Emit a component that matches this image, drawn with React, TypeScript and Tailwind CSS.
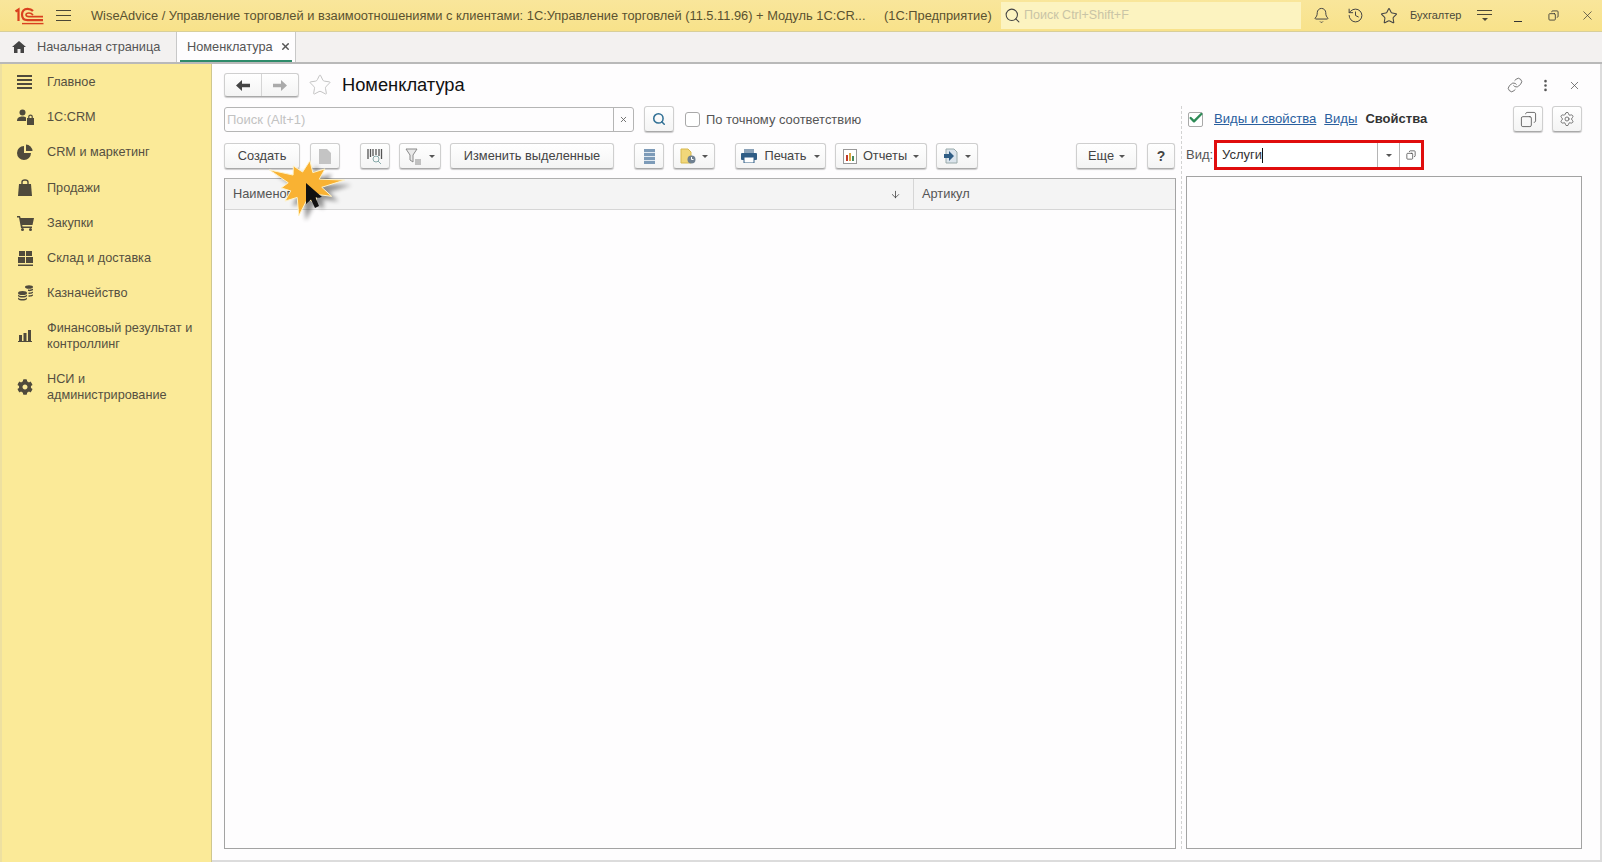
import { ArrowDown, Check, Copy, Link, MoreVertical, Search, Settings, Star, X, Bell, History } from "lucide-react";
import { FaCog } from "react-icons/fa";
import type { ReactNode } from "react";

function Caret() {
  return <span className="inline-block w-0 h-0 border-l-[3px] border-r-[3px] border-t-[3px] border-l-transparent border-r-transparent border-t-[#555]" />;
}

function Btn({ className = "", children }: { className?: string; children?: ReactNode }) {
  return (
    <div className={"h-[26px] flex items-center justify-center rounded-[3px] border border-[#cfcfcf] border-b-[#a9a9a9] bg-gradient-to-b from-white to-[#f4f4f4] shadow-[0_1px_1px_rgba(0,0,0,0.2)] text-[12.8px] text-[#444] shrink-0 " + className}>
      {children}
    </div>
  );
}

function Logo() {
  return (
    <svg width="30" height="18" viewBox="0 0 30 18" fill="none" stroke="#d9401f" strokeWidth="2.2">
      <path d="M1.5 4.5 L4.5 2.5 V14" />
      <path d="M19 4 C17.5 2.2 15.5 1.8 13.5 1.8 C10 1.8 8 4.4 8 7.6 C8 11 10 13.2 13.5 13.2 H29" />
      <path d="M19 8 C18 6.6 16.8 6 15 6 C13 6 12 7 12 7.8 C12 8.8 13.4 9.6 15 9.6 H29" strokeWidth="1.6" />
      <path d="M8 16.6 H29.5" strokeWidth="1.4" />
    </svg>
  );
}

function NavArrow({ color, flip }: { color: string; flip?: boolean }) {
  return (
    <svg width="14" height="11" viewBox="0 0 14 11" fill={color} className={flip ? "-scale-x-100" : ""}>
      <path d="M0 5.5 L6 0 V3.8 H14 V7.2 H6 V11 Z" />
    </svg>
  );
}

const iconFill = "#4f4a3c";

const menuIcons: Record<string, ReactNode> = {
  main: (
    <svg width="16" height="14" viewBox="0 0 16 14" fill={iconFill}>
      <rect y="0" width="15" height="2" /><rect y="4" width="15" height="2" /><rect y="8" width="15" height="2" /><rect y="12" width="15" height="2" />
    </svg>
  ),
  crm: (
    <svg width="17" height="16" viewBox="0 0 17 16" fill={iconFill}>
      <circle cx="5.5" cy="3.5" r="3" /><path d="M0 12 C0 8.5 2.5 7.5 5.5 7.5 C7 7.5 8 7.8 9 8.4 V12 Z" />
      <path d="M10 9 H17 V16 H10 Z" /><path d="M11.8 9 V7.5 C11.8 5.6 15.2 5.6 15.2 7.5 V9" fill="none" stroke={iconFill} strokeWidth="1.2" />
    </svg>
  ),
  pie: (
    <svg width="16" height="16" viewBox="0 0 16 16" fill={iconFill}>
      <path d="M7 2 A7 7 0 1 0 14 9 H7 Z" /><path d="M9 0.5 A7 7 0 0 1 15.5 7 H9 Z" />
    </svg>
  ),
  bag: (
    <svg width="14" height="17" viewBox="0 0 14 17" fill={iconFill}>
      <path d="M1 5 H13 L14 17 H0 Z" /><path d="M4 7 V3 C4 0.4 10 0.4 10 3 V7" fill="none" stroke={iconFill} strokeWidth="1.4" />
    </svg>
  ),
  cart: (
    <svg width="17" height="15" viewBox="0 0 17 15" fill={iconFill}>
      <path d="M0 0 H3 L3.6 2 H17 L15.5 9 H5.2 L5.5 10.5 H15 V12 H4 L2 1.5 H0 Z" /><circle cx="5.5" cy="13.5" r="1.5" /><circle cx="13.5" cy="13.5" r="1.5" />
    </svg>
  ),
  stock: (
    <svg width="15" height="15" viewBox="0 0 15 15" fill={iconFill}>
      <rect x="1" width="6" height="5" /><rect x="8" width="6" height="5" /><rect x="0" y="6" width="7" height="6" /><rect x="8" y="6" width="7" height="6" /><rect y="13.5" width="15" height="1.5" />
    </svg>
  ),
  money: (
    <svg width="15" height="16" viewBox="0 0 15 16" fill={iconFill}>
      <ellipse cx="4.5" cy="8" rx="4.5" ry="2" /><path d="M0 9.5 C1.5 11.5 7.5 11.5 9 9.5 V11 C7.5 13 1.5 13 0 11 Z" /><path d="M0 12.5 C1.5 14.5 7.5 14.5 9 12.5 V14 C7.5 16 1.5 16 0 14 Z" />
      <ellipse cx="11" cy="2" rx="4" ry="1.8" /><path d="M10 4.6 C11.5 5 14 4.6 15 3.6 V5 C14 6 12 6.4 10 6 Z" /><path d="M10.5 7.4 C12 7.6 14 7.2 15 6.4 V7.8 C14 8.8 12 9.2 10.5 8.9 Z" /><path d="M10.5 10.2 C12 10.4 14 10 15 9.2 V10.6 C14 11.6 12 12 10.5 11.7 Z" />
    </svg>
  ),
  chart: (
    <svg width="14" height="12" viewBox="0 0 14 12" fill={iconFill}>
      <rect x="1" y="5" width="3" height="6" /><rect x="5.5" y="3" width="3" height="8" /><rect x="10" y="0" width="3" height="11" /><rect y="11" width="14" height="1" />
    </svg>
  ),
  gear: <FaCog size={16} color={iconFill} />,
};

const menu = [
  { icon: "main", label: ["Главное"] },
  { icon: "crm", label: ["1С:CRM"] },
  { icon: "pie", label: ["CRM и маркетинг"] },
  { icon: "bag", label: ["Продажи"] },
  { icon: "cart", label: ["Закупки"] },
  { icon: "stock", label: ["Склад и доставка"] },
  { icon: "money", label: ["Казначейство"] },
  { icon: "chart", label: ["Финансовый результат и", "контроллинг"] },
  { icon: "gear", label: ["НСИ и", "администрирование"] },
];

function Burst() {
  const pts: string[] = [];
  const radii = [40, 17, 30, 16, 26, 17, 38, 17, 28, 16, 24, 17, 40, 17, 26, 16, 30, 17, 28, 16];
  radii.forEach((r, i) => {
    const a = (i / radii.length) * Math.PI * 2 - 0.15;
    pts.push(`${42 + r * Math.cos(a)},${33 + r * 0.82 * Math.sin(a)}`);
  });
  return (
    <svg width="96" height="76" viewBox="0 0 96 76" className="absolute left-[266px] top-[152px] pointer-events-none">
      <polygon points={pts.join(" ")} fill="#000" opacity="0.4" transform="translate(4 5)" className="blur-[2px]" />
      <polygon points={pts.join(" ")} fill="#f9b233" stroke="#fff3c8" strokeWidth="1" transform="translate(-3 0)" />
      <path d="M40 31 L40 52 L45 47.5 L49 56 L53 54 L49.5 45.5 L56 45 Z" fill="#111" />
    </svg>
  );
}

export default function App() {
  return (
    <div className="relative w-[1602px] h-[862px] overflow-hidden bg-[#fefdfe] text-[#444] font-['Liberation_Sans',Arial,sans-serif] flex flex-col">
      {/* Title bar */}
      <header className="h-[32px] shrink-0 flex items-center bg-gradient-to-b from-[#f9e69b] to-[#f8e28a] border-b border-[#d8cf9a] text-[#5a5230]">
        <div className="ml-[14px] w-[30px] flex"><Logo /></div>
        <div className="ml-[12px] w-[15px] flex flex-col gap-[4px]">
          <span className="h-px bg-[#4b4736]" /><span className="h-px bg-[#4b4736]" /><span className="h-px bg-[#4b4736]" />
        </div>
        <div className="ml-[20px] w-[779px] pt-px text-[12.85px] whitespace-nowrap">WiseAdvice / Управление торговлей и взаимоотношениями с клиентами: 1С:Управление торговлей (11.5.11.96) + Модуль 1С:CR...</div>
        <div className="ml-[14px] w-[117px] pt-px text-[12.85px] whitespace-nowrap">(1С:Предприятие)</div>
        <div className="h-[27px] w-[300px] ml-0 flex items-center bg-[#fcf3c0]">
          <Search size={17} className="ml-[3px] text-[#444]" strokeWidth={1.5} />
          <span className="ml-[3px] text-[12.5px] text-[#c9c4a6]">Поиск Ctrl+Shift+F</span>
        </div>
        <Bell size={17} strokeWidth={1.4} className="ml-[12px] text-[#444]" />
        <History size={17} strokeWidth={1.4} className="ml-[17px] text-[#444]" />
        <Star size={18} strokeWidth={1.4} className="ml-[16px] text-[#444]" />
        <span className="ml-[12px] text-[11px] text-[#4a4a3a]">Бухгалтер</span>
        <div className="ml-[16px] w-[15px] flex flex-col items-center gap-[3px]">
          <span className="h-px w-full bg-[#4b4736]" /><span className="h-px w-full bg-[#4b4736]" />
          <span className="w-0 h-0 border-l-[3px] border-r-[3px] border-t-[3px] border-l-transparent border-r-transparent border-t-[#4b4736]" />
        </div>
        <span className="ml-[22px] mt-[11px] w-[8px] h-px bg-[#333]" />
        <Copy size={11} strokeWidth={1.8} className="ml-[26px] text-[#333] -scale-x-100" />
        <X size={15} strokeWidth={1.1} className="ml-[21px] text-[#333]" />
      </header>

      {/* Tabs */}
      <nav className="h-[32px] shrink-0 flex bg-[#f3f1f0] border-b-2 border-[#b9b9b9]">
        <div className="w-[177px] flex items-center border-r border-[#c8c8c8]">
          <svg width="14" height="12" viewBox="0 0 14 12" fill="#444" className="ml-[12px]">
            <path d="M7 0 L14 6 H12 V12 H8.5 V8 H5.5 V12 H2 V6 H0 Z" />
          </svg>
          <span className="ml-[11px] text-[12.75px] text-[#555] whitespace-nowrap">Начальная страница</span>
        </div>
        <div className="w-[119px] relative bg-[#fefdfe] border-r border-[#c8c8c8] flex items-center pb-px">
          <span className="ml-[10px] text-[12.75px] text-[#555]">Номенклатура</span>
          <X size={11} strokeWidth={3} className="ml-[7px] text-[#555]" />
          <span className="absolute left-[3px] right-[3px] bottom-0 h-[2px] bg-[#2e8b6a]" />
        </div>
      </nav>

      <div className="flex-1 flex min-h-0">
        {/* Sidebar */}
        <aside className="w-[212px] shrink-0 pt-[0.5px] bg-[#fbea98] border-l-2 border-l-[#eee0a0] border-r border-r-[#cfc78f]">
          {menu.map((m) => (
            <div key={m.icon} className="flex items-center py-[9.5px] leading-4 text-[12.7px] text-[#555041]">
              <div className="w-[45px] flex justify-center pl-px shrink-0">{menuIcons[m.icon]}</div>
              <div>
                {m.label.map((l) => (
                  <div key={l} className="whitespace-nowrap">{l}</div>
                ))}
              </div>
            </div>
          ))}
        </aside>

        {/* Form */}
        <main className="flex-1 min-w-0 flex flex-col border-b-2 border-r-2 border-[#dcdcdc] pl-[12px] pt-[8px] pb-[11px]">
          {/* Form header */}
          <div className="h-[26px] flex items-center shrink-0">
            <div className="w-[75px] h-[24px] flex rounded-[3px] border border-[#cfcfcf] border-b-[#a9a9a9] bg-gradient-to-b from-white to-[#f4f4f4] shadow-[0_1px_1px_rgba(0,0,0,0.2)]">
              <div className="w-[37px] flex items-center justify-center border-r border-[#d5d5d5]"><NavArrow color="#444" /></div>
              <div className="flex-1 flex items-center justify-center"><NavArrow color="#aaa" flip /></div>
            </div>
            <Star size={24} strokeWidth={1} className="ml-[9px] text-[#c4c4c4]" />
            <h1 className="ml-[10px] text-[18.3px] text-[#111]">Номенклатура</h1>
            <Link size={16} strokeWidth={1.2} className="ml-auto text-[#555]" />
            <MoreVertical size={15} strokeWidth={2.2} className="ml-[15px] text-[#555]" />
            <X size={13} strokeWidth={1.4} className="ml-[15px] mr-[19px] text-[#555]" />
          </div>

          <div className="flex-1 min-h-0 flex mt-[8px]">
            {/* Left column */}
            <div className="w-[952px] shrink-0 flex flex-col">
              <div className="h-[26px] flex items-center">
                <div className="w-[410px] h-[25px] flex rounded-[3px] border border-[#b5b5b5]">
                  <span className="flex-1 pl-[2px] text-[13px] leading-[23px] text-[#c2c2c2]">Поиск (Alt+1)</span>
                  <div className="w-[20px] flex items-center justify-center border-l border-[#b5b5b5]"><X size={9} strokeWidth={2.4} className="text-[#666]" /></div>
                </div>
                <Btn className="ml-[10px] w-[30px]"><Search size={14} strokeWidth={2.6} className="text-[#2f6f94]" /></Btn>
                <span className="ml-[11px] w-[15px] h-[15px] rounded-[3px] border border-[#a9a9a9] bg-white" />
                <span className="ml-[6px] pt-px text-[12.95px] text-[#555]">По точному соответствию</span>
              </div>

              {/* Toolbar */}
              <div className="mt-[11px] h-[26px] flex items-center">
                <Btn className="w-[76px]">Создать</Btn>
                <Btn className="ml-[10px] w-[30px]">
                  <svg width="14" height="17" viewBox="0 0 14 17"><path d="M1 1 H9 L13 5 V16 H1 Z" fill="#c4c4c4" /></svg>
                </Btn>
                <Btn className="ml-[20px] w-[30px]">
                  <svg width="18" height="17" viewBox="0 0 18 17" fill="none" stroke="#555">
                    <path d="M2 1 V11 M4.5 1 V9 M7 1 V8 M10 1 V7 M13 1 V8 M15.5 1 V11" strokeWidth="1.3" />
                    <circle cx="10" cy="11" r="3" stroke="#8aa" /><path d="M12 13 L15 16" stroke="#8aa" />
                  </svg>
                </Btn>
                <Btn className="ml-[9px] w-[42px] gap-[6px]">
                  <svg width="18" height="17" viewBox="0 0 18 17" fill="none" stroke="#8a8a8a">
                    <path d="M1 1 H12 L8 7 V14 L5 12 V7 Z" fill="#e9e9e9" /><path d="M10 12 H16 M10 14 H16 M10 16 H16" />
                  </svg>
                  <Caret />
                </Btn>
                <Btn className="ml-[9px] w-[164px]">Изменить выделенные</Btn>
                <Btn className="ml-[20px] w-[30px]">
                  <svg width="11" height="15" viewBox="0 0 11 15"><rect width="11" height="15" fill="#7d9bb8" /><path d="M0 3.5 H11 M0 7.5 H11 M0 11.5 H11" stroke="#dfe8f0" /></svg>
                </Btn>
                <Btn className="ml-[9px] w-[42px] gap-[6px]">
                  <svg width="16" height="16" viewBox="0 0 16 16">
                    <path d="M1 1 H8 L11 4 V15 H1 Z" fill="#f1d77a" stroke="#d8b94e" />
                    <circle cx="11.5" cy="11.5" r="4" fill="#6f8090" /><path d="M11.5 9 V11.5 H13.5" stroke="#fff" fill="none" />
                  </svg>
                  <Caret />
                </Btn>
                <Btn className="ml-[20px] w-[91px] gap-[8px]">
                  <svg width="16" height="14" viewBox="0 0 16 14">
                    <rect x="3" y="0" width="10" height="4" fill="#8aa2b8" /><rect x="0" y="4" width="16" height="7" rx="1" fill="#2f5d85" /><rect x="3" y="8" width="10" height="6" fill="#fff" stroke="#2f5d85" />
                  </svg>
                  <span>Печать</span>
                  <Caret />
                </Btn>
                <Btn className="ml-[9px] w-[92px] gap-[6px]">
                  <svg width="14" height="15" viewBox="0 0 14 15">
                    <rect x="0.5" y="0.5" width="13" height="14" fill="#fff" stroke="#999" />
                    <rect x="3" y="6" width="2" height="6" fill="#c0392b" /><rect x="6" y="4" width="2" height="8" fill="#d9a441" /><rect x="9" y="7" width="2" height="5" fill="#4a8a5c" />
                  </svg>
                  <span>Отчеты</span>
                  <Caret />
                </Btn>
                <Btn className="ml-[9px] w-[42px] gap-[6px]">
                  <svg width="16" height="16" viewBox="0 0 16 16">
                    <path d="M3 1 H11 L14 4 V15 H3 Z" fill="#dbe4ec" stroke="#9aa" />
                    <path d="M1 6 H6 V3 L11 8 L6 13 V10 H1 Z" fill="#2f5d85" />
                  </svg>
                  <Caret />
                </Btn>
                <Btn className="ml-auto w-[61px] gap-[5px]"><span>Еще</span><Caret /></Btn>
                <Btn className="ml-[10px] mr-px w-[28px] font-bold text-[14px]">?</Btn>
              </div>

              {/* List */}
              <div className="mt-[9px] flex-1 min-h-0 border border-[#a3a3a3] border-t-[#b0b0b0]">
                <div className="h-[31px] flex bg-[#f4f4f4] border-b border-[#d6d6d6] text-[12.8px] text-[#555]">
                  <div className="w-[689px] flex items-center justify-between pl-[8px] pr-[12px] border-r border-[#d6d6d6]">
                    <span>Наименование</span>
                    <ArrowDown size={11} strokeWidth={1.6} className="text-[#333]" />
                  </div>
                  <div className="flex items-center pl-[8px]">Артикул</div>
                </div>
              </div>
            </div>

            {/* Splitter */}
            <div className="w-[10px] shrink-0 flex justify-center">
              <div className="w-0 h-full border-l border-dashed border-[#d2d2d2]" />
            </div>

            {/* Right column */}
            <div className="flex-1 min-w-0 flex flex-col">
              <div className="h-[26px] flex items-center">
                <span className="ml-[2px] w-[15px] h-[15px] rounded-[2px] border border-[#a9a9a9] bg-white flex items-center justify-center">
                  <Check size={16} strokeWidth={3.6} className="text-[#2e8b57] -mt-[2px] shrink-0" />
                </span>
                <a className="ml-[11px] text-[13.1px] text-[#2a5f9e] underline whitespace-nowrap">Виды и свойства</a>
                <a className="ml-[8px] text-[13.1px] text-[#2a5f9e] underline">Виды</a>
                <span className="ml-[8px] text-[13px] font-bold text-[#333]">Свойства</span>
                <Btn className="ml-auto w-[30px]"><Copy size={17} strokeWidth={1.2} className="text-[#555] -scale-x-100" /></Btn>
                <Btn className="ml-[9px] mr-[18px] w-[30px]"><Settings size={16} strokeWidth={1.3} className="text-[#666]" /></Btn>
              </div>

              <div className="mt-[8px] h-[30px] flex items-center">
                <span className="w-[28px] text-[13px] text-[#555]">Вид:</span>
                <div className="w-[210px] h-[30px] flex items-center border-[3px] border-[#e00d0d] bg-white">
                  <span className="ml-[5px] text-[13px] text-[#333] flex-1 flex items-center">Услуги<span className="w-px h-[15px] bg-[#111]" /></span>
                  <div className="w-[22px] h-full flex items-center justify-center border-l border-[#b5b5b5]"><Caret /></div>
                  <div className="w-[22px] h-full flex items-center justify-center border-l border-[#b5b5b5]">
                    <Copy size={10} strokeWidth={1.8} className="text-[#444] -scale-x-100" />
                  </div>
                </div>
              </div>

              <div className="mt-[6px] flex-1 min-h-0 mr-[18px] border border-[#a3a3a3]" />
            </div>
          </div>
        </main>
      </div>

      <Burst />
    </div>
  );
}
